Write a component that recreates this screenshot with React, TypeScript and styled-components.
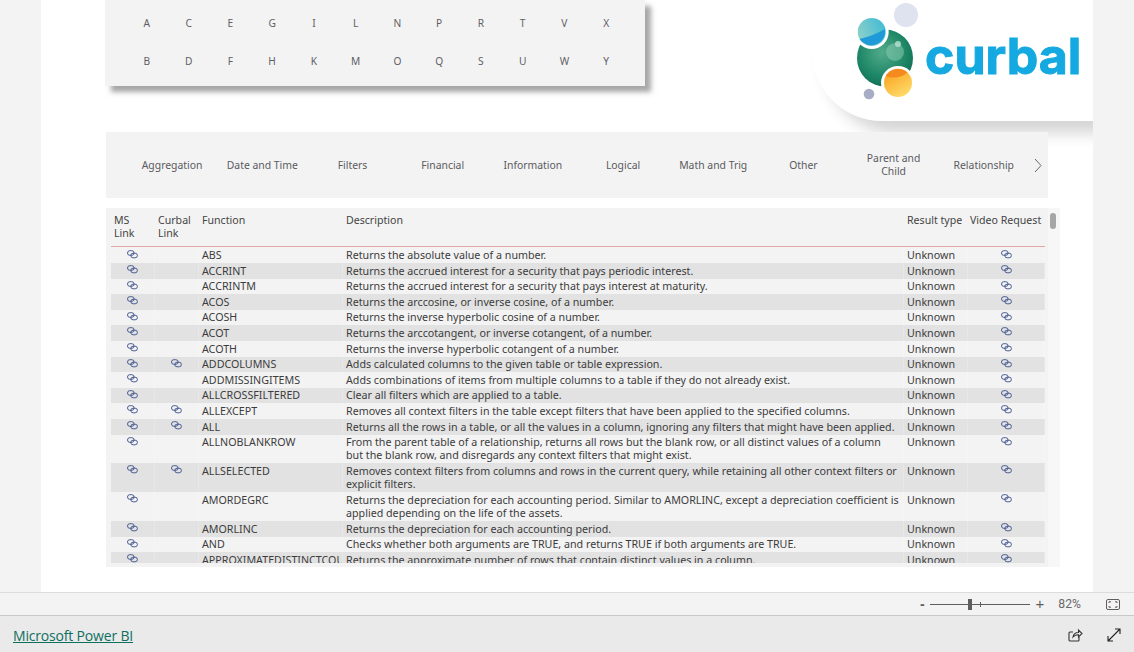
import React from "react";
import styled, { createGlobalStyle } from "styled-components";

const Global = createGlobalStyle`
  html, body { margin: 0; padding: 0; height: 100%; background: #f3f3f3; }
  #root { height: 100%; }
  * { box-sizing: border-box; }
`;

const FONT = `"Noto Sans", "DejaVu Sans", sans-serif`;

const Shell = styled.div`
  width: 1134px; height: 652px; display: flex; flex-direction: column; overflow: hidden;
  font-family: ${FONT}; color: #4a4a4a;
`;
const Stage = styled.div`
  flex: 0 0 592px; height: 592px; padding: 0 41px; overflow: hidden;
`;
const Page = styled.div`
  width: 1052px; height: 592px; background: #fff; padding-left: 64px; overflow: hidden;
  display: flex; flex-direction: column; align-items: flex-start;
`;
const TopRow = styled.div`
  width: 100%; height: 121px; flex: none; display: flex; justify-content: space-between; align-items: flex-start;
`;
const LetterCard = styled.div`
  width: 540px; height: 86px; padding: 4px 18px 0 21px; background: #f3f3f3;
  box-shadow: 6px 6px 5px rgba(80,80,80,.5);
  display: grid; grid-template-columns: repeat(12, 41.75px); grid-template-rows: 38px 38px; grid-auto-flow: column;
`;
const Letter = styled.div`
  display: flex; align-items: center; justify-content: center; font-size: 10.2px; color: #5f5f66;
`;
const LogoPanel = styled.div`
  width: 281px; height: 121px; background: #fff; border-bottom-left-radius: 70px;
  box-shadow: 14px 12px 15px rgba(60,60,60,.22); display: flex; position: relative;
`;
const LogoMark = styled.svg`
  width: 80px; height: 105px; margin-left: 33px; flex: none;
`;
const LogoWord = styled.span`
  font-family: "Inter", "Lato", sans-serif; font-weight: 700; font-size: 50px; line-height: 60px;
  color: #14a9e0; margin: 26px 0 0 0; -webkit-text-stroke: 1px #14a9e0; letter-spacing: 0;
`;
const Tabs = styled.div`
  position: relative; margin-top: 11px; margin-left: 1px; width: 941.5px; height: 66px; flex: none; background: #f3f3f3;
  padding-left: 21px; display: flex; align-items: center;
`;
const Tab = styled.div`
  width: 90.2px; flex: none; padding: 0 8px; text-align: center; font-size: 10.4px; line-height: 13px; color: #5a5a60;
`;
const Chevron = styled.svg`
  width: 8px; height: 15px; margin-left: 5px; flex: none;
`;
const Card = styled.div`
  margin-top: 10px; margin-left: 1px; width: 954px; height: 359px; flex: none; background: #f3f3f3;
  position: relative; padding: 0 15px 4px 5px;
`;
const TableClip = styled.div`
  height: 355px; overflow: hidden;
`;
const COLS = "44px 44px 144px 561px 64px 77px";
const HeadRow = styled.div`
  height: 39px; margin-bottom: .5px; display: grid; grid-template-columns: ${COLS}; border-bottom: 1px solid #e3a6a6;
  font-size: 10.6px; line-height: 13px; color: #444; padding-top: 5.5px;
`;
const HeadCell = styled.div<{ $pad?: number }>`
  padding-left: ${(p) => p.$pad ?? 3}px; white-space: nowrap;
`;
const Row = styled.div<{ $alt: boolean; $lines: number }>`
  height: ${(p) => (p.$lines === 2 ? 28.8 : 15.6)}px; display: grid; grid-template-columns: ${COLS};
  background: ${(p) => (p.$alt ? "#e2e2e2" : "#f3f3f3")};
  font-size: 10.7px; line-height: 13px; color: #3c3c3c;
`;
const Cell = styled.div`
  padding: 1.5px 4px 0 3px; overflow: hidden; border-right: 1px solid rgba(255,255,255,.18);
`;
const Single = styled(Cell)`
  white-space: nowrap;
`;
const IconCell = styled.div`
  display: flex; justify-content: center; align-items: flex-start; padding-top: 2px;
  border-right: 1px solid rgba(255,255,255,.18);
`;
const Track = styled.div`
  position: absolute; top: 0; right: 0; bottom: 0; width: 12px; background: #f7f7f7;
`;
const Thumb = styled.div`
  position: absolute; top: 5px; right: 4px; width: 6px; height: 16px; border-radius: 3px; background: #a6a6a6;
`;
const ZoomBar = styled.div`
  flex: 0 0 24px; background: #f3f3f3; border-top: 1px solid #dcdcdc; border-bottom: 1px solid #c8c8c8;
  display: flex; align-items: center; justify-content: flex-end; color: #666; padding-right: 14px;
`;
const ZoomMinus = styled.span`
  font-size: 14px; font-weight: 700; line-height: 16px; color: #605e5c; font-family: "Liberation Sans", sans-serif; margin-right: 5px;
`;
const ZoomPlus = styled.span`
  font-size: 15px; line-height: 16px; color: #605e5c; font-family: "Liberation Sans", sans-serif;
`;
const Slider = styled.div`
  width: 100px; height: 1px; background: #605e5c; margin-right: 6px; position: relative;
`;
const SliderThumb = styled.div`
  position: absolute; left: 38px; top: -5px; width: 4px; height: 11px; background: #605e5c;
`;
const SliderTick = styled.div`
  position: absolute; left: 50px; top: -2px; width: 1px; height: 5px; background: #605e5c;
`;
const Percent = styled.span`
  font-size: 12.2px; margin: 0 25px 0 14px; color: #6a6a6a; font-family: "Roboto", sans-serif;
`;
const Footer = styled.div`
  flex: 1; background: #eaeaea; display: flex; align-items: center; padding: 2px 13px 0;
`;
const BrandLink = styled.a`
  font-size: 14px; color: #0f6f5f; text-decoration: underline; font-family: "Open Sans", sans-serif; letter-spacing: -.18px;
`;
const FooterIcons = styled.div`
  margin-left: auto; display: flex; gap: 24px; align-items: center;
`;

const LinkIcon = () => (
  <svg width="11" height="9" viewBox="0 0 11 9" fill="none" stroke="#3a4f8a" strokeWidth=".9">
    <rect x=".5" y=".7" width="6.6" height="4.6" rx="2.3" />
    <rect x="3.8" y="3.2" width="6.6" height="4.6" rx="2.3" />
  </svg>
);

type R = [string, string, boolean?];
const rows: R[] = [
  ["ABS", "Returns the absolute value of a number."],
  ["ACCRINT", "Returns the accrued interest for a security that pays periodic interest."],
  ["ACCRINTM", "Returns the accrued interest for a security that pays interest at maturity."],
  ["ACOS", "Returns the arccosine, or inverse cosine, of a number."],
  ["ACOSH", "Returns the inverse hyperbolic cosine of a number."],
  ["ACOT", "Returns the arccotangent, or inverse cotangent, of a number."],
  ["ACOTH", "Returns the inverse hyperbolic cotangent of a number."],
  ["ADDCOLUMNS", "Adds calculated columns to the given table or table expression.", true],
  ["ADDMISSINGITEMS", "Adds combinations of items from multiple columns to a table if they do not already exist."],
  ["ALLCROSSFILTERED", "Clear all filters which are applied to a table."],
  ["ALLEXCEPT", "Removes all context filters in the table except filters that have been applied to the specified columns.", true],
  ["ALL", "Returns all the rows in a table, or all the values in a column, ignoring any filters that might have been applied.", true],
  ["ALLNOBLANKROW", "From the parent table of a relationship, returns all rows but the blank row, or all distinct values of a column but the blank row, and disregards any context filters that might exist."],
  ["ALLSELECTED", "Removes context filters from columns and rows in the current query, while retaining all other context filters or explicit filters.", true],
  ["AMORDEGRC", "Returns the depreciation for each accounting period. Similar to AMORLINC, except a depreciation coefficient is applied depending on the life of the assets."],
  ["AMORLINC", "Returns the depreciation for each accounting period."],
  ["AND", "Checks whether both arguments are TRUE, and returns TRUE if both arguments are TRUE."],
  ["APPROXIMATEDISTINCTCOUNT", "Returns the approximate number of rows that contain distinct values in a column."],
];

const letters = "ABCDEFGHIKLMNOPQRSTUVWXY".split("");
const tabs = ["Aggregation", "Date and Time", "Filters", "Financial", "Information", "Logical", "Math and Trig", "Other", "Parent and Child", "Relationship"];

export default function App() {
  return (
    <Shell>
      <Global />
      <Stage>
        <Page>
          <TopRow>
            <LetterCard>
              {letters.map((l) => <Letter key={l}>{l}</Letter>)}
            </LetterCard>
            <LogoPanel>
              <LogoMark viewBox="0 0 80 105">
                <defs>
                  <radialGradient id="green" cx=".45" cy=".4" r=".65">
                    <stop offset="0" stopColor="#52ab8b" />
                    <stop offset=".7" stopColor="#1a8463" />
                    <stop offset="1" stopColor="#136b52" />
                  </radialGradient>
                  <linearGradient id="teal" x1="0" y1=".6" x2="1" y2=".1">
                    <stop offset="0" stopColor="#8cd0c8" />
                    <stop offset="1" stopColor="#3cbad6" />
                  </linearGradient>
                  <linearGradient id="orange" x1=".2" y1="0" x2=".8" y2="1">
                    <stop offset="0" stopColor="#f9a11b" />
                    <stop offset="1" stopColor="#ffdf70" />
                  </linearGradient>
                </defs>
                <circle cx="61" cy="15" r="12" fill="#dfe2ef" />
                <ellipse cx="40" cy="58" rx="28" ry="28.5" fill="url(#green)" />
                <circle cx="50" cy="52" r="9" fill="#8fd0b6" opacity=".5" />
                <circle cx="53" cy="44" r="3" fill="#b9e2d2" opacity=".8" />
                <circle cx="26.7" cy="32" r="17" fill="#fff" />
                <circle cx="26.7" cy="32" r="14" fill="url(#teal)" />
                <path d="M14.5 39 Q28 36 40 29 A14 14 0 0 1 14.5 39Z" fill="#1f9ad8" />
                <circle cx="53" cy="83" r="17" fill="#fff" />
                <circle cx="53" cy="83" r="14" fill="url(#orange)" />
                <path d="M40.5 76.5 A14 14 0 0 1 62.5 72.5 Q54 80 40.5 76.5Z" fill="#f58a1f" />
                <circle cx="24" cy="94" r="5.3" fill="#a7adc4" />
              </LogoMark>
              <LogoWord>curbal</LogoWord>
            </LogoPanel>
          </TopRow>
          <Tabs>
            {tabs.map((t) => <Tab key={t}>{t}</Tab>)}
            <Chevron viewBox="0 0 8 15" fill="none" stroke="#666" strokeWidth="1"><path d="M1 1l6 6.5L1 14" /></Chevron>
          </Tabs>
          <Card>
            <Track />
            <Thumb />
            <TableClip>
              <HeadRow>
                <HeadCell>MS<br />Link</HeadCell>
                <HeadCell>Curbal<br />Link</HeadCell>
                <HeadCell>Function</HeadCell>
                <HeadCell>Description</HeadCell>
                <HeadCell>Result type</HeadCell>
                <HeadCell $pad={2}>Video Request</HeadCell>
              </HeadRow>
              {rows.map(([fn, desc, curbal], i) => (
                <Row key={fn} $alt={i % 2 === 1} $lines={desc.length > 118 ? 2 : 1}>
                  <IconCell><LinkIcon /></IconCell>
                  <IconCell>{curbal ? <LinkIcon /> : null}</IconCell>
                  <Single>{fn}</Single>
                  <Cell>{desc}</Cell>
                  <Single>Unknown</Single>
                  <IconCell><LinkIcon /></IconCell>
                </Row>
              ))}
            </TableClip>
          </Card>
        </Page>
      </Stage>
      <ZoomBar>
        <ZoomMinus>-</ZoomMinus>
        <Slider><SliderThumb /><SliderTick /></Slider>
        <ZoomPlus>+</ZoomPlus>
        <Percent>82%</Percent>
        <svg width="14" height="11" viewBox="0 0 14 11" fill="none" stroke="#605e5c" strokeWidth="1">
          <rect x=".5" y=".5" width="13" height="10" rx="1.5" />
          <path d="M3 4V2.8h2M9 2.8h2V4M11 7v1.2H9M5 8.2H3V7" />
        </svg>
      </ZoomBar>
      <Footer>
        <BrandLink href="#">Microsoft Power BI</BrandLink>
        <FooterIcons>
          <svg width="15" height="14" viewBox="0 0 15 14" fill="none" stroke="#333" strokeWidth="1.1">
            <path d="M11 9v3a1 1 0 0 1-1 1H2a1 1 0 0 1-1-1V5a1 1 0 0 1 1-1h3" />
            <path d="M5 9c.5-3 2.5-4.5 5.5-4.5V2L14 5.5 10.5 9V6.8C8 6.8 6.3 7.6 5 9Z" />
          </svg>
          <svg width="14" height="14" viewBox="0 0 14 14" fill="none" stroke="#222" strokeWidth="1.1">
            <path d="M1 13 13 1M8 1h5v5M1 8v5h5" />
          </svg>
        </FooterIcons>
      </Footer>
    </Shell>
  );
}
